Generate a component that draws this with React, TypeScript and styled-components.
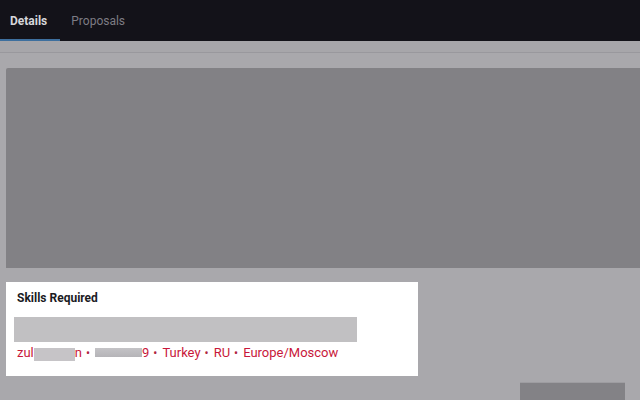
import React from "react";
import styled, { createGlobalStyle } from "styled-components";

const Global = createGlobalStyle`
  html, body {
    margin: 0;
    padding: 0;
    background: #a9a8ac;
    font-family: Roboto, "Liberation Sans", sans-serif;
    overflow: hidden;
  }
`;

const Page = styled.div`
  width: 640px;
  height: 400px;
  display: flex;
  flex-direction: column;
  background: #a9a8ac;
`;

const TabBar = styled.div`
  height: 41px;
  display: flex;
  background: #131219;
  flex-shrink: 0;
`;

const Tab = styled.div<{ $active?: boolean }>`
  display: flex;
  align-items: center;
  padding: 0 13px 0 10px;
  margin-right: 1px;
  font-size: 12px;
  font-weight: ${(p) => (p.$active ? 700 : 400)};
  color: ${(p) => (p.$active ? "#d6d6da" : "#7d7c84")};
  box-shadow: ${(p) => (p.$active ? "inset 0 -2px 0 #3e6f9e" : "none")};
`;

const Strip = styled.div`
  height: 11px;
  border-bottom: 1px solid #99989d;
  background: #a7a6aa;
  flex-shrink: 0;
`;

const Body = styled.div`
  flex: 1;
  display: flex;
  flex-direction: column;
  padding: 15px 0 0 6px;
  gap: 14px;
`;

const Banner = styled.div`
  height: 200px;
  background: #828185;
  border-top-left-radius: 2px;
`;

const Row = styled.div`
  display: flex;
  align-items: flex-start;
`;

const Card = styled.div`
  width: 412px;
  height: 94px;
  background: #ffffff;
  box-sizing: border-box;
  padding: 9px 0 0 11px;
  display: flex;
  flex-direction: column;
`;

const Title = styled.div`
  font-size: 12px;
  font-weight: 700;
  color: #1b1b1f;
  line-height: 14px;
`;

const Placeholder = styled.div`
  margin: 12px 0 0 -3px;
  width: 343px;
  height: 25px;
  background: #c1c0c2;
`;

const Meta = styled.div`
  margin-top: 2px;
  display: flex;
  align-items: center;
  font-size: 13px;
  color: #c8173a;
  line-height: 16px;
  white-space: nowrap;
`;

const Dot = styled.span`
  color: #b0253f;
  font-size: 12px;
  margin: 0 5px 0 4px;
`;

const Redact = styled.span<{ $w: number }>`
  display: inline-block;
  width: ${(p) => p.$w}px;
  height: 13px;
  background: #c6c4c7;
  vertical-align: middle;
  margin-top: 4px;
`;

const Blur = styled.span<{ $w: number }>`
  display: inline-block;
  width: ${(p) => p.$w}px;
  height: 9px;
  background: linear-gradient(#c4c3c6, #b5b4b8);
  vertical-align: middle;
`;

const Side = styled.div`
  flex: 1;
  display: flex;
  justify-content: flex-end;
  padding: 100px 15px 0 0;
`;

const Action = styled.div`
  width: 105px;
  height: 20px;
  background: #838286;
  border-top: 1px solid #9e9da1;
`;

export default function App() {
  return (
    <Page>
      <Global />
      <TabBar>
        <Tab $active>Details</Tab>
        <Tab>Proposals</Tab>
      </TabBar>
      <Strip />
      <Body>
        <Banner />
        <Row>
          <Card>
            <Title>Skills Required</Title>
            <Placeholder />
            <Meta>
              zul
              <Redact $w={41} />
              n<Dot>•</Dot>
              <Blur $w={47} />9<Dot>•</Dot>
              Turkey<Dot>•</Dot>
              RU<Dot>•</Dot>
              Europe/Moscow
            </Meta>
          </Card>
          <Side>
            <Action />
          </Side>
        </Row>
      </Body>
    </Page>
  );
}
